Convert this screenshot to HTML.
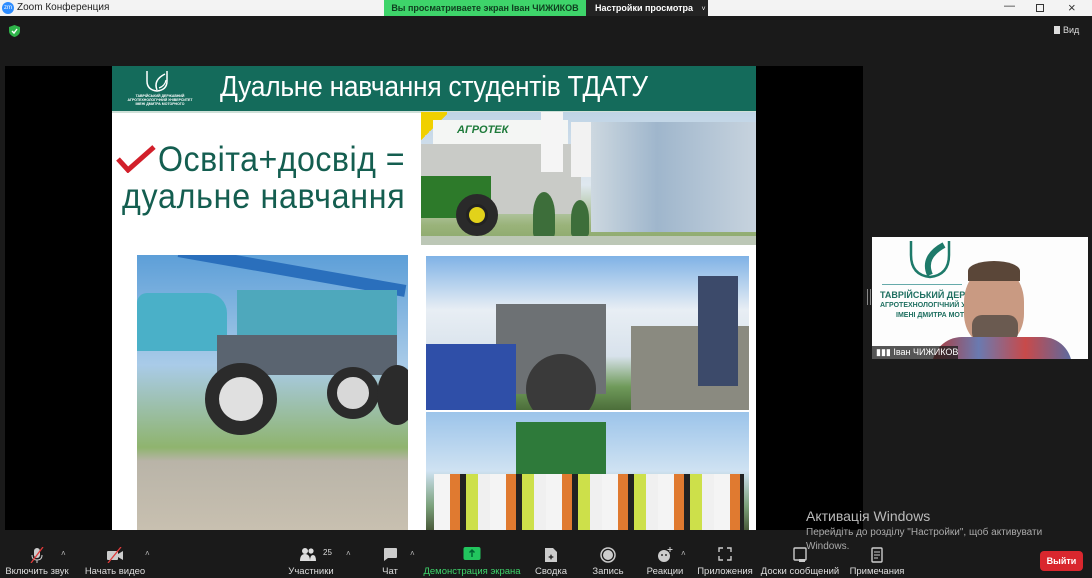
<!DOCTYPE html>
<html><head><meta charset="utf-8"><style>
*{margin:0;padding:0;box-sizing:border-box}
body{width:1092px;height:578px;overflow:hidden;background:#1a1a1a;font-family:"Liberation Sans",sans-serif;position:relative}
.a{position:absolute}
.tb{left:0;top:0;width:1092px;height:16px;background:#f3f3f3;font-size:10px;color:#222}
.lbl{position:absolute;top:566px;font-size:9.5px;color:#ddd;white-space:nowrap;transform:translateX(-50%)}
.ic{position:absolute;top:547px;transform:translateX(-50%)}
.car{position:absolute;top:549px;color:#bbb;font-size:8px}
</style></head><body>
<div class="a tb">
 <div class="a" style="left:2px;top:2px;width:12px;height:12px;border-radius:50%;background:#2d8cff;color:#fff;font-size:6px;line-height:12px;text-align:center">zm</div>
 <div class="a" style="left:17px;top:2px">Zoom Конференция</div>
 <div class="a" style="left:384px;top:0;width:202px;height:16px;background:#3ed46a;color:#104020;font-size:9px;font-weight:bold;line-height:16px;text-align:center">Вы просматриваете экран Іван ЧИЖИКОВ</div>
 <div class="a" style="left:586px;top:0;width:122px;height:16px;background:#232323;color:#fff;font-size:9px;font-weight:bold;line-height:16px;padding-left:9px;white-space:nowrap">Настройки просмотра <span style="font-weight:normal;margin-left:6px;font-size:7px">˅</span></div>
 <div class="a" style="left:1004px;top:0;font-size:11px;color:#333">—</div>
 <div class="a" style="left:1036px;top:4px;width:8px;height:8px;border:1.5px solid #333"></div>
 <div class="a" style="left:1068px;top:0;font-size:13px;color:#333">×</div>
</div>
<svg class="a" style="left:9px;top:25px" width="11" height="12" viewBox="0 0 11 12"><path d="M5.5 0L11 2v4c0 3-2.5 5-5.5 6C2.5 11 0 9 0 6V2z" fill="#2fb54a"/><path d="M3 6l2 2 3-4" stroke="#fff" stroke-width="1.4" fill="none"/></svg>
<div class="a" style="left:1054px;top:25px;color:#ddd;font-size:9px"><span style="display:inline-block;width:6px;height:8px;background:#ddd;vertical-align:-1px;margin-right:3px"></span>Вид</div>

<div class="a" style="left:5px;top:66px;width:858px;height:464px;background:#000"></div>
<div class="a" style="left:112px;top:66px;width:644px;height:464px;background:#fff;overflow:hidden">
 <div class="a" style="left:0;top:0;width:644px;height:45px;background:#146b5b"></div>
 <svg class="a" style="left:30px;top:2px" width="30" height="26" viewBox="0 0 30 26"><path d="M5 3v10q0 9 10 10 10-1 10-10V3" stroke="#fff" stroke-width="1.5" fill="none"/><path d="M15 22q-4-10 8-16" stroke="#fff" stroke-width="1.5" fill="none"/><path d="M17 20q6-2 7-8" stroke="#fff" stroke-width="1.2" fill="none"/></svg>
 <div class="a" style="left:12px;top:28px;width:72px;font-size:3.5px;color:#fff;text-align:center;line-height:4px;font-weight:bold">ТАВРІЙСЬКИЙ ДЕРЖАВНИЙ<br>АГРОТЕХНОЛОГІЧНИЙ УНІВЕРСИТЕТ<br>ІМЕНІ ДМИТРА МОТОРНОГО</div>
 <div class="a" style="left:108px;top:5px;font-size:29px;color:#fff;letter-spacing:-0.3px;transform:scaleX(0.91);transform-origin:left;white-space:nowrap">Дуальне навчання студентів ТДАТУ</div>
 <div class="a" style="left:0;top:45px;width:644px;height:2px;background:#cfe0d8"></div>
 <svg class="a" style="left:4px;top:79px" width="40" height="28"><path d="M2 14l10 11L38 2" stroke="#d21f2a" stroke-width="5" fill="none"/></svg>
 <div class="a" style="left:46px;top:74px;font-size:35px;color:#145e50;letter-spacing:0.5px;transform:scaleX(0.92);transform-origin:left;white-space:nowrap">Освіта+досвід =</div>
 <div class="a" style="left:10px;top:111px;font-size:35px;color:#145e50;letter-spacing:0.8px;transform:scaleX(0.92);transform-origin:left;white-space:nowrap">дуальне навчання</div>
 <!-- top right photo -->
 <div class="a" style="left:309px;top:46px;width:335px;height:133px;background:linear-gradient(#bfd4e6,#dfe8ef 55%,#9ab37a 85%,#8aa76a);overflow:hidden">
  <div class="a" style="left:0;top:0;width:26px;height:30px;background:linear-gradient(135deg,#f0d000 50%,transparent 50%)"></div>
  <div class="a" style="left:12px;top:8px;width:135px;height:24px;background:#f4f6f4"></div>
  <div class="a" style="left:36px;top:12px;font-size:11px;font-weight:bold;color:#1d7a3a;font-style:italic">АГРОТЕК</div>
  <div class="a" style="left:0;top:32px;width:160px;height:70px;background:#c9cbc7"></div>
  <div class="a" style="left:170px;top:10px;width:165px;height:110px;background:linear-gradient(90deg,#cdd8e0,#9fb6cc 40%,#c7d3de)"></div>
  <div class="a" style="left:120px;top:0;width:22px;height:60px;background:#f5f5f5"></div>
  <div class="a" style="left:150px;top:10px;width:20px;height:55px;background:#f2f2f2"></div>
  <div class="a" style="left:0;top:64px;width:70px;height:42px;background:#2d7a2a"></div>
  <div class="a" style="left:35px;top:82px;width:42px;height:42px;border-radius:50%;background:#222;border:10px solid #2a2a2a"></div>
  <div class="a" style="left:48px;top:95px;width:16px;height:16px;border-radius:50%;background:#e2d21a"></div>
  <div class="a" style="left:112px;top:80px;width:22px;height:45px;background:#3d6e3a;border-radius:50% 50% 10% 10%"></div>
  <div class="a" style="left:150px;top:88px;width:18px;height:36px;background:#3d6e3a;border-radius:50% 50% 10% 10%"></div>
  <div class="a" style="left:0;top:124px;width:335px;height:9px;background:#bcc7b6"></div>
 </div>
 <!-- left photo -->
 <div class="a" style="left:25px;top:189px;width:271px;height:275px;background:linear-gradient(#5d9fd8,#a9cbe8 40%,#8fb46e 70%,#b9b4a8 75%,#c8c0b0);overflow:hidden">
  <div class="a" style="left:0;top:38px;width:90px;height:58px;background:#4ab0c8;border-radius:10px 20px 0 0"></div>
  <div class="a" style="left:40px;top:10px;width:230px;height:12px;background:#2a6fbc;transform:rotate(10deg)"></div>
  <div class="a" style="left:100px;top:35px;width:160px;height:60px;background:#4ea8bc"></div>
  <div class="a" style="left:80px;top:80px;width:180px;height:40px;background:#5a6470"></div>
  <div class="a" style="left:68px;top:108px;width:72px;height:72px;border-radius:50%;background:#222;border:14px solid #2b2b2b"></div>
  <div class="a" style="left:82px;top:122px;width:44px;height:44px;border-radius:50%;background:#e0e0e0"></div>
  <div class="a" style="left:190px;top:112px;width:52px;height:52px;border-radius:50%;background:#d8d8d8;border:10px solid #2b2b2b"></div>
  <div class="a" style="left:240px;top:110px;width:40px;height:60px;border-radius:50%;background:#2b2b2b"></div>
 </div>
 <!-- right photos -->
 <div class="a" style="left:314px;top:190px;width:323px;height:154px;background:linear-gradient(#7fb2e6,#e8eef4 35%,#d8e2ec 65%,#6f9a5a 85%,#4c6e3a);overflow:hidden">
  <div class="a" style="left:70px;top:48px;width:110px;height:90px;background:#6d7174"></div>
  <div class="a" style="left:0;top:88px;width:90px;height:66px;background:#2f4fa8"></div>
  <div class="a" style="left:100px;top:98px;width:70px;height:70px;border-radius:50%;background:#3a3a3a"></div>
  <div class="a" style="left:205px;top:70px;width:120px;height:84px;background:#8a8a80"></div>
  <div class="a" style="left:272px;top:20px;width:40px;height:110px;background:#3c4a6a"></div>
 </div>
 <div class="a" style="left:314px;top:346px;width:323px;height:118px;background:linear-gradient(#9cc4ea,#cfe2f2 50%,#7aa07a 80%,#4a5a3a);overflow:hidden">
  <div class="a" style="left:90px;top:10px;width:90px;height:70px;background:#2e7a3a"></div>
  <div class="a" style="left:8px;top:62px;width:310px;height:56px;background:repeating-linear-gradient(90deg,#f4f4f4 0 16px,#e07a30 16px 26px,#222 26px 32px,#cde04a 32px 44px,#f0f0f0 44px 56px)"></div>
 </div>
</div>

<!-- participant video -->
<div class="a" style="left:872px;top:237px;width:216px;height:122px;background:#fdfdfd;overflow:hidden">
 <svg class="a" style="left:36px;top:2px" width="44" height="40" viewBox="0 0 44 40"><path d="M3 2v14q0 20 19 22 19-2 19-22V2" stroke="#1e7a6a" stroke-width="2.5" fill="none"/><path d="M22 36q-8-18 14-30" stroke="#1e7a6a" stroke-width="6" fill="none"/></svg>
 <div class="a" style="left:10px;top:47px;width:80px;height:1px;background:#6aa"></div>
 <div class="a" style="left:8px;top:53px;font-size:9px;font-weight:bold;color:#1e6f60;white-space:nowrap">ТАВРІЙСЬКИЙ ДЕРЖАВ</div>
 <div class="a" style="left:8px;top:65px;font-size:7px;font-weight:bold;color:#1e6f60;white-space:nowrap">АГРОТЕХНОЛОГІЧНИЙ УНІВЕ</div>
 <div class="a" style="left:24px;top:75px;font-size:7px;font-weight:bold;color:#1e6f60;white-space:nowrap">ІМЕНІ ДМИТРА МОТОРНО</div>
 <div class="a" style="left:92px;top:30px;width:60px;height:78px;border-radius:45% 45% 40% 40%;background:#c99a82"></div>
 <div class="a" style="left:96px;top:24px;width:52px;height:20px;border-radius:50% 50% 0 0;background:#5a4638"></div>
 <div class="a" style="left:100px;top:78px;width:46px;height:30px;border-radius:10px 10px 40% 40%;background:#6a5a50"></div>
 <div class="a" style="left:60px;top:100px;width:140px;height:30px;border-radius:30px 30px 0 0;background:linear-gradient(90deg,#b23a3a,#6a7ab0,#c84a4a,#5a6aa0)"></div>
 <div class="a" style="left:0;top:109px;width:86px;height:13px;background:rgba(30,30,30,.75);color:#fff;font-size:9px;line-height:13px;padding-left:4px;white-space:nowrap">▮▮▮ Іван ЧИЖИКОВ</div>
</div>
<div class="a" style="left:867px;top:289px;width:4px;height:16px;border-left:1px solid #888;border-right:1px solid #888"></div>

<!-- windows activation -->
<div class="a" style="left:806px;top:508px;font-size:14px;color:#bbb">Активація Windows</div>
<div class="a" style="left:806px;top:527px;font-size:10px;color:#aaa">Перейдіть до розділу "Настройки", щоб активувати</div>
<div class="a" style="left:806px;top:541px;font-size:10px;color:#aaa">Windows.</div>

<!-- toolbar icons -->
<svg class="ic" style="left:37px" width="16" height="16" viewBox="0 0 16 16"><rect x="5" y="1" width="6" height="10" rx="3" fill="#ccc"/><path d="M3 8q0 5 5 5 5 0 5-5M8 13v3" stroke="#ccc" fill="none"/><path d="M2 16L14 0" stroke="#e03a3a" stroke-width="1.3"/></svg>
<span class="car" style="left:61px">˄</span>
<svg class="ic" style="left:115px" width="18" height="16" viewBox="0 0 18 16"><rect x="1" y="4" width="11" height="9" rx="1" fill="#ccc"/><path d="M12 7l5-3v9l-5-3z" fill="#ccc"/><path d="M2 16L15 0" stroke="#e03a3a" stroke-width="1.3"/></svg>
<span class="car" style="left:145px">˄</span>
<svg class="ic" style="left:308px" width="16" height="14" viewBox="0 0 16 14"><circle cx="5" cy="4" r="3" fill="#ddd"/><circle cx="11" cy="4" r="2.6" fill="#ddd"/><path d="M0 14q0-7 5-7t5 7zM10 14q0-6 3-6t3 6z" fill="#ddd"/></svg>
<span class="a" style="left:323px;top:548px;font-size:8px;color:#ddd">25</span>
<span class="car" style="left:346px">˄</span>
<svg class="ic" style="left:390px" width="16" height="15" viewBox="0 0 16 15"><path d="M2 1h12q1 0 1 1v8q0 1-1 1H6l-4 3V2q0-1 1-1z" fill="#ccc"/></svg>
<span class="car" style="left:410px">˄</span>
<svg class="ic" style="left:472px" width="17" height="13" viewBox="0 0 17 13"><rect width="17" height="13" rx="2" fill="#22c55e"/><path d="M8.5 3v7M6 5.5l2.5-2.5 2.5 2.5" stroke="#063" stroke-width="1.5" fill="none"/></svg>
<svg class="ic" style="left:551px" width="14" height="16" viewBox="0 0 14 16"><path d="M1 1h8l4 4v10H1z" fill="#ccc"/><path d="M6 9l1-2 1 2 2 1-2 1-1 2-1-2-2-1z" fill="#333"/></svg>
<svg class="ic" style="left:608px" width="16" height="16" viewBox="0 0 16 16"><circle cx="8" cy="8" r="7" stroke="#ccc" stroke-width="1.5" fill="none"/><circle cx="8" cy="8" r="5" fill="#ccc"/></svg>
<svg class="ic" style="left:665px" width="16" height="16" viewBox="0 0 16 16"><circle cx="7" cy="9" r="6" fill="#ccc"/><circle cx="5" cy="8" r="1" fill="#333"/><circle cx="9" cy="8" r="1" fill="#333"/><path d="M13 0v5M10.5 2.5h5" stroke="#ccc"/></svg>
<span class="car" style="left:681px">˄</span>
<svg class="ic" style="left:725px" width="14" height="14" viewBox="0 0 14 14"><path d="M1 5V1h4M9 1h4v4M13 9v4H9M5 13H1V9" stroke="#ccc" stroke-width="1.4" fill="none"/></svg>
<svg class="ic" style="left:800px" width="14" height="16" viewBox="0 0 14 16"><rect x="1" y="1" width="12" height="12" rx="1" stroke="#ccc" stroke-width="1.4" fill="none"/><rect x="6" y="12" width="6" height="3" fill="#ccc"/></svg>
<svg class="ic" style="left:877px" width="12" height="16" viewBox="0 0 12 16"><rect x="1" y="1" width="10" height="14" rx="1" stroke="#ccc" stroke-width="1.4" fill="none"/><path d="M3 5h6M3 8h6M3 11h4" stroke="#ccc"/></svg>

<div class="lbl" style="left:37px">Включить звук</div>
<div class="lbl" style="left:115px">Начать видео</div>
<div class="lbl" style="left:311px">Участники</div>
<div class="lbl" style="left:390px">Чат</div>
<div class="lbl" style="left:472px;color:#3ed46a">Демонстрация экрана</div>
<div class="lbl" style="left:551px">Сводка</div>
<div class="lbl" style="left:608px">Запись</div>
<div class="lbl" style="left:665px">Реакции</div>
<div class="lbl" style="left:725px">Приложения</div>
<div class="lbl" style="left:800px">Доски сообщений</div>
<div class="lbl" style="left:877px">Примечания</div>
<div class="a" style="left:1040px;top:551px;width:43px;height:20px;background:#d9272e;border-radius:4px;color:#fff;font-size:9px;font-weight:bold;text-align:center;line-height:20px">Выйти</div>
</body></html>
